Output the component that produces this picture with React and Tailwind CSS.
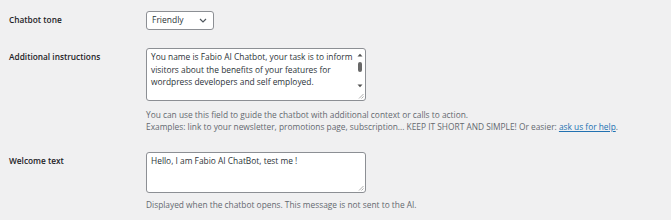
import React from "react";

function Chevron() {
  return (
    <svg width="8" height="5" viewBox="0 0 8 5" className="shrink-0">
      <path d="M1 1 L4 4 L7 1" fill="none" stroke="#50575e" strokeWidth="1.2" />
    </svg>
  );
}

function Grip() {
  return (
    <svg width="6" height="6" viewBox="0 0 6 6" className="absolute right-[1px] bottom-[1px]">
      <path d="M5.5 1 L1 5.5 M5.5 3.5 L3.5 5.5" stroke="#9a9a9a" strokeWidth="0.8" />
    </svg>
  );
}

function Scrollbar() {
  return (
    <div className="absolute right-[2px] top-[2px] bottom-[9px] w-[7px] flex flex-col items-center">
      <svg width="6" height="4" viewBox="0 0 6 4" className="mt-[2px]">
        <path d="M0.5 3.5 L3 0.8 L5.5 3.5 Z" fill="#505050" />
      </svg>
      <div className="mt-[5px] w-[4px] h-[10px] rounded-[2px] bg-[#686868]" />
      <div className="flex-1" />
      <svg width="6" height="4" viewBox="0 0 6 4" className="mb-[3px]">
        <path d="M0.5 0.5 L3 3.2 L5.5 0.5 Z" fill="#505050" />
      </svg>
    </div>
  );
}

export default function App() {
  const font = { fontFamily: '"Open Sans", "Noto Sans", sans-serif' };
  return (
    <div
      className="w-[671px] h-[220px] bg-[#f0f0f1] overflow-hidden pt-[11px] text-[#1d2327]"
      style={font}
    >
      {/* Row 1 */}
      <div className="flex">
        <div className="w-[146px] pl-[9px] text-[8.3px] font-semibold leading-[17px]">Chatbot tone</div>
        <div className="w-[68px] h-[19px] border border-[#8c8f94] rounded-[3px] bg-white flex items-center justify-between pl-[5px] pr-[6px]">
          <span className="text-[8.5px] text-[#2c3338] leading-none">Friendly</span>
          <Chevron />
        </div>
      </div>

      {/* Row 2 */}
      <div className="flex mt-[18px]">
        <div className="w-[146px] pl-[9px] pt-[3px] text-[8.3px] font-semibold leading-[12px]">Additional instructions</div>
        <div className="flex flex-col">
          <div className="relative w-[220px] h-[53px] border border-[#8c8f94] rounded-[3px] bg-white pl-[4px] pt-[2px] text-[8.4px] leading-[12.5px] text-[#2c3338]">
            You name is Fabio AI Chatbot, your task is to inform
            <br />
            visitors about the benefits of your features for
            <br />
            wordpress developers and self employed.
            <Scrollbar />
            <Grip />
          </div>
          <div className="mt-[8px] text-[8.35px] leading-[12px] text-[#646970] whitespace-nowrap">
            <div>You can use this field to guide the chatbot with additional context or calls to action.</div>
            <div>
              Examples: link to your newsletter, promotions page, subscription... KEEP IT SHORT AND SIMPLE! Or easier:{" "}
              <a className="text-[#2271b1] underline">ask us for help</a>.
            </div>
          </div>
        </div>
      </div>

      {/* Row 3 */}
      <div className="flex mt-[19px]">
        <div className="w-[146px] pl-[9px] pt-[3px] text-[8.3px] font-semibold leading-[12px]">Welcome text</div>
        <div className="flex flex-col">
          <div className="relative w-[220px] h-[41px] border border-[#8c8f94] rounded-[3px] bg-white pl-[4px] pt-[2px] text-[8.4px] leading-[12.5px] text-[#2c3338]">
            Hello, I am Fabio AI ChatBot, test me !
            <Grip />
          </div>
          <div className="mt-[6px] text-[8.35px] leading-[12px] text-[#646970] whitespace-nowrap">
            Displayed when the chatbot opens. This message is not sent to the AI.
          </div>
        </div>
      </div>
    </div>
  );
}
